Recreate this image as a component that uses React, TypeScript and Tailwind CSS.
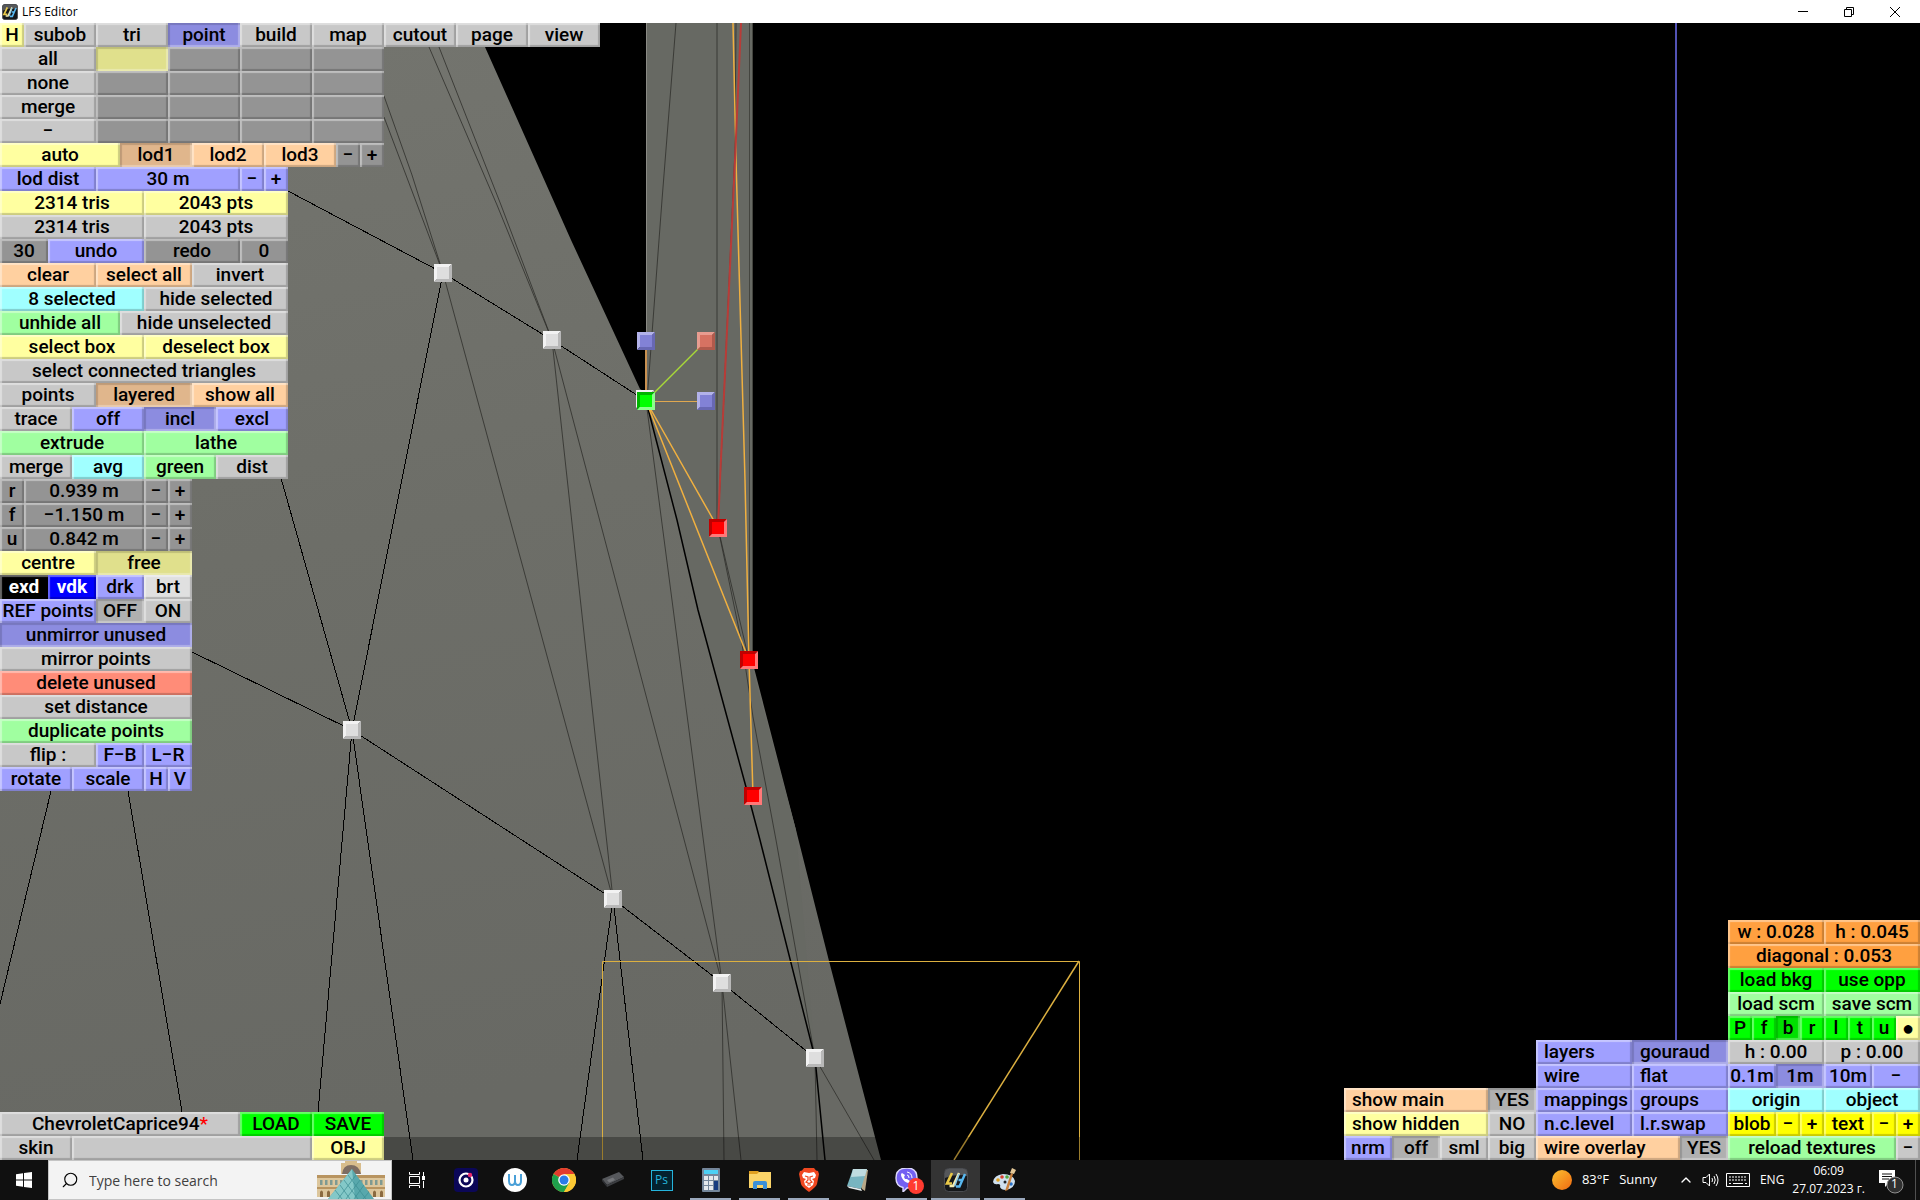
import { useState } from "react";
import type { ReactNode } from "react";
import { ChevronUp, Search } from "lucide-react";

type Cell = {
  label?: string;
  w: string;
  tone?: string;
  on?: boolean;
  left?: boolean;
};

// Every panel is built on a 24px module
const G = "bg-[#c8c8c8]";
const DARK = "bg-[#949494]";
const OFF = "bg-[#b0b0b0]";
const YELLOW = "bg-[#ffffa0]";
const BLUE = "bg-[#a0a0ff]";
const BLUE_ON = "bg-[#8c8ce0]";
const PEACH = "bg-[#ffd0a0]";
const PEACH_ON = "bg-[#e0b68c]";
const MINT = "bg-[#a0ffa0]";
const CYAN = "bg-[#a0ffff]";
const LIME = "bg-[#00ff00]";
const ORANGE = "bg-[#ffa040]";

const menuRow: Cell[] = [
  { label: "H", w: "w-6", tone: YELLOW },
  { label: "subob", w: "w-18" },
  { label: "tri", w: "w-18" },
  { label: "point", w: "w-18", tone: BLUE_ON, on: true },
  { label: "build", w: "w-18" },
  { label: "map", w: "w-18" },
  { label: "cutout", w: "w-18" },
  { label: "page", w: "w-18" },
  { label: "view", w: "w-18" },
];

const emptySlots = (count: number): Cell[] =>
  Array.from({ length: count }, () => ({ w: "w-18", tone: DARK }));

const stepper = (label: string, value: string): Cell[] => [
  { label, w: "w-6", tone: DARK },
  { label: value, w: "w-30", tone: DARK },
  { label: "−", w: "w-6", tone: DARK },
  { label: "+", w: "w-6", tone: DARK },
];

const toolRows: Cell[][] = [
  [
    { label: "all", w: "w-24" },
    { w: "w-18", tone: "bg-[#e0e08c]", on: true },
    ...emptySlots(3),
  ],
  [{ label: "none", w: "w-24" }, ...emptySlots(4)],
  [{ label: "merge", w: "w-24" }, ...emptySlots(4)],
  [{ label: "−", w: "w-24" }, ...emptySlots(4)],
  [
    { label: "auto", w: "w-30", tone: YELLOW },
    { label: "lod1", w: "w-18", tone: PEACH_ON, on: true },
    { label: "lod2", w: "w-18", tone: PEACH },
    { label: "lod3", w: "w-18", tone: PEACH },
    { label: "−", w: "w-6", tone: DARK },
    { label: "+", w: "w-6", tone: DARK },
  ],
  [
    { label: "lod dist", w: "w-24", tone: BLUE },
    { label: "30 m", w: "w-36", tone: BLUE },
    { label: "−", w: "w-6", tone: BLUE },
    { label: "+", w: "w-6", tone: BLUE },
  ],
  [
    { label: "2314 tris", w: "w-36", tone: YELLOW },
    { label: "2043 pts", w: "w-36", tone: YELLOW },
  ],
  [
    { label: "2314 tris", w: "w-36" },
    { label: "2043 pts", w: "w-36" },
  ],
  [
    { label: "30", w: "w-12", tone: DARK },
    { label: "undo", w: "w-24", tone: BLUE },
    { label: "redo", w: "w-24", tone: DARK },
    { label: "0", w: "w-12", tone: DARK },
  ],
  [
    { label: "clear", w: "w-24", tone: PEACH },
    { label: "select all", w: "w-24", tone: PEACH },
    { label: "invert", w: "w-24" },
  ],
  [
    { label: "8 selected", w: "w-36", tone: CYAN },
    { label: "hide selected", w: "w-36" },
  ],
  [
    { label: "unhide all", w: "w-30", tone: MINT },
    { label: "hide unselected", w: "w-42" },
  ],
  [
    { label: "select box", w: "w-36", tone: YELLOW },
    { label: "deselect box", w: "w-36", tone: YELLOW },
  ],
  [{ label: "select connected triangles", w: "w-72" }],
  [
    { label: "points", w: "w-24" },
    { label: "layered", w: "w-24", tone: PEACH_ON, on: true },
    { label: "show all", w: "w-24", tone: PEACH },
  ],
  [
    { label: "trace", w: "w-18" },
    { label: "off", w: "w-18", tone: BLUE },
    { label: "incl", w: "w-18", tone: BLUE_ON, on: true },
    { label: "excl", w: "w-18", tone: BLUE },
  ],
  [
    { label: "extrude", w: "w-36", tone: MINT },
    { label: "lathe", w: "w-36", tone: MINT },
  ],
  [
    { label: "merge", w: "w-18" },
    { label: "avg", w: "w-18", tone: CYAN },
    { label: "green", w: "w-18", tone: MINT },
    { label: "dist", w: "w-18" },
  ],
  stepper("r", "0.939 m"),
  stepper("f", "−1.150 m"),
  stepper("u", "0.842 m"),
  [
    { label: "centre", w: "w-24", tone: YELLOW },
    { label: "free", w: "w-24", tone: "bg-[#e0e08c]", on: true },
  ],
  [
    { label: "exd", w: "w-12", tone: "bg-black text-white font-bold" },
    { label: "vdk", w: "w-12", tone: "bg-[#0000ff] text-white font-bold" },
    { label: "drk", w: "w-12", tone: BLUE },
    { label: "brt", w: "w-12", tone: "bg-[#e0e0e0]" },
  ],
  [
    { label: "REF points", w: "w-24", tone: BLUE },
    { label: "OFF", w: "w-12", tone: OFF, on: true },
    { label: "ON", w: "w-12" },
  ],
  [{ label: "unmirror unused", w: "w-48", tone: BLUE_ON, on: true }],
  [{ label: "mirror points", w: "w-48" }],
  [{ label: "delete unused", w: "w-48", tone: "bg-[#ff8c78]" }],
  [{ label: "set distance", w: "w-48" }],
  [{ label: "duplicate points", w: "w-48", tone: MINT }],
  [
    { label: "flip :", w: "w-24" },
    { label: "F−B", w: "w-12", tone: BLUE },
    { label: "L−R", w: "w-12", tone: BLUE },
  ],
  [
    { label: "rotate", w: "w-18", tone: BLUE },
    { label: "scale", w: "w-18", tone: BLUE },
    { label: "H", w: "w-6", tone: BLUE },
    { label: "V", w: "w-6", tone: BLUE },
  ],
];

const showRows: Cell[][] = [
  [
    { label: "show main", w: "w-36", tone: PEACH, left: true },
    { label: "YES", w: "w-12", tone: OFF, on: true },
  ],
  [
    { label: "show hidden", w: "w-36", tone: YELLOW, left: true },
    { label: "NO", w: "w-12" },
  ],
  [
    { label: "nrm", w: "w-12", tone: BLUE },
    { label: "off", w: "w-12", tone: OFF, on: true },
    { label: "sml", w: "w-12" },
    { label: "big", w: "w-12" },
  ],
];

const modeRows: Cell[][] = [
  [
    { label: "layers", w: "w-24", tone: BLUE, left: true },
    { label: "gouraud", w: "w-24", tone: BLUE_ON, on: true, left: true },
  ],
  [
    { label: "wire", w: "w-24", tone: BLUE, left: true },
    { label: "flat", w: "w-24", tone: BLUE, left: true },
  ],
  [
    { label: "mappings", w: "w-24", tone: BLUE, left: true },
    { label: "groups", w: "w-24", tone: BLUE, left: true },
  ],
  [
    { label: "n.c.level", w: "w-24", tone: BLUE, left: true },
    { label: "l.r.swap", w: "w-24", tone: BLUE, left: true },
  ],
  [
    { label: "wire overlay", w: "w-36", tone: PEACH, left: true },
    { label: "YES", w: "w-12", tone: OFF, on: true },
  ],
];

const viewRows: Cell[][] = [
  [
    { label: "w : 0.028", w: "w-24", tone: ORANGE },
    { label: "h : 0.045", w: "w-24", tone: ORANGE },
  ],
  [{ label: "diagonal : 0.053", w: "w-48", tone: ORANGE }],
  [
    { label: "load bkg", w: "w-24", tone: LIME },
    { label: "use opp", w: "w-24", tone: LIME },
  ],
  [
    { label: "load scm", w: "w-24", tone: MINT },
    { label: "save scm", w: "w-24", tone: MINT },
  ],
  [
    { label: "P", w: "w-6", tone: LIME },
    { label: "f", w: "w-6", tone: LIME },
    { label: "b", w: "w-6", tone: "bg-[#00e000]", on: true },
    { label: "r", w: "w-6", tone: LIME },
    { label: "l", w: "w-6", tone: LIME },
    { label: "t", w: "w-6", tone: LIME },
    { label: "u", w: "w-6", tone: LIME },
    { label: "●", w: "w-6 text-xl", tone: YELLOW },
  ],
  [
    { label: "h : 0.00", w: "w-24" },
    { label: "p : 0.00", w: "w-24" },
  ],
  [
    { label: "0.1m", w: "w-12", tone: BLUE },
    { label: "1m", w: "w-12", tone: BLUE_ON, on: true },
    { label: "10m", w: "w-12", tone: BLUE },
    { label: "−", w: "w-12", tone: BLUE },
  ],
  [
    { label: "origin", w: "w-24", tone: CYAN },
    { label: "object", w: "w-24", tone: CYAN },
  ],
  [
    { label: "blob", w: "w-12", tone: "bg-[#ffff00]" },
    { label: "−", w: "w-6", tone: "bg-[#ffff00]" },
    { label: "+", w: "w-6", tone: "bg-[#ffff00]" },
    { label: "text", w: "w-12", tone: "bg-[#ffff00]" },
    { label: "−", w: "w-6", tone: "bg-[#ffff00]" },
    { label: "+", w: "w-6", tone: "bg-[#ffff00]" },
  ],
  [
    { label: "reload textures", w: "w-42", tone: MINT },
    { label: "−", w: "w-6" },
  ],
];

const RAISED =
  "shadow-[inset_2px_2px_1px_rgba(255,255,255,0.4),inset_-2px_-2px_1px_rgba(0,0,0,0.2)]";
const SUNKEN =
  "shadow-[inset_2px_2px_1px_rgba(0,0,0,0.15),inset_-2px_-2px_1px_rgba(255,255,255,0.3)]";

function Key({ cell }: { cell: Cell }) {
  return (
    <button
      type="button"
      aria-pressed={cell.on}
      aria-label={cell.label ? undefined : "empty slot"}
      className={`h-6 shrink-0 overflow-hidden whitespace-nowrap leading-6 ${cell.w} ${
        cell.tone ?? G
      } ${cell.on ? SUNKEN : RAISED} ${cell.left ? "pl-2 text-left" : "text-center"}`}>
      {cell.label}
    </button>
  );
}

function Rows({ rows }: { rows: Cell[][] }) {
  return (
    <div className="flex flex-col">
      {rows.map((row, i) => (
        <div key={i} className="flex">
          {row.map((cell, j) => (
            <Key key={j} cell={cell} />
          ))}
        </div>
      ))}
    </div>
  );
}

// Mesh edges, in viewport space
const blackEdges = [
  "288,191 443,273 552,340 646,401",
  "192,652 352,730 613,899 722,983 815,1058",
  "443,273 352,730",
  "352,730 318,1112",
  "352,730 413,1160",
  "51,791 0,1004",
  "128,791 182,1112",
  "613,899 577,1160",
  "613,899 643,1160",
  "281,478 352,730",
];

const faintEdges = [
  "384,96 412,175 443,273",
  "384,117 443,273",
  "429,47 497,205 552,340",
  "439,47 501,205 552,340",
  "443,273 613,899",
  "552,340 613,899",
  "552,340 722,983",
  "646,401 722,983",
  "676,23 662,200 647,401",
  "717,23 717,528",
  "736,23 735,150 718,528",
  "718,528 742,644 753,717 776,840 815,1058",
  "718,528 749,660",
  "722,983 724,1160",
  "722,983 741,1160",
  "815,1058 874,1160",
  "815,1058 817,1160",
];

const markers = [
  { x: 443, y: 273, c: "white" },
  { x: 552, y: 340, c: "white" },
  { x: 352, y: 730, c: "white" },
  { x: 613, y: 899, c: "white" },
  { x: 722, y: 983, c: "white" },
  { x: 815, y: 1058, c: "white" },
  { x: 645, y: 399, c: "white" },
  { x: 646, y: 401, c: "green" },
  { x: 646, y: 341, c: "blue" },
  { x: 706, y: 401, c: "blue" },
  { x: 706, y: 341, c: "rose" },
  { x: 718, y: 528, c: "red" },
  { x: 749, y: 660, c: "red" },
  { x: 753, y: 796, c: "red" },
];

// face, top/left bevel, bottom/right bevel
const markerTones: { [key: string]: [string, string, string] } = {
  white: ["#dedede", "#f2f2f2", "#b8b8b8"],
  green: ["#00ff00", "#00b400", "#8cff8c"],
  blue: ["#8282d6", "#b2b2ea", "#6868b4"],
  rose: ["#d67262", "#e89c90", "#b05a4c"],
  red: ["#ff0000", "#c00000", "#ff7878"],
};

function Marker({ x, y, c }: { x: number; y: number; c: string }) {
  const [face, light, dark] = markerTones[c];
  return (
    <g transform={`translate(${x - 9} ${y - 9})`}>
      <path d="M0 0H18L14 4H4V14L0 18Z" fill={light} />
      <path d="M18 18H0L4 14H14V4L18 0Z" fill={dark} />
      <rect x="3" y="3" width="12" height="12" fill={face} />
    </g>
  );
}

function Viewport() {
  return (
    <svg
      className="absolute inset-0 h-full w-full"
      viewBox="0 23 1920 1137"
      preserveAspectRatio="xMinYMin slice"
      fill="none"
      aria-label="3D viewport">
      <defs>
        <linearGradient id="panel" x1="0" y1="0" x2="0.15" y2="1">
          <stop offset="0" stopColor="#74756f" />
          <stop offset="0.5" stopColor="#6d6e68" />
          <stop offset="1" stopColor="#686964" />
        </linearGradient>
      </defs>
      <rect y="23" width="1920" height="1137" fill="#000" />
      <path
        d="M0 23H475L485 47L571 240L640 389L660 401L752 660L796 830L829 961L881 1160H0Z"
        fill="url(#panel)"
      />
      <path
        d="M646 23H753V672L796 830L815 1058L760 840L746 787L727 717L698 610L677 520L646 401Z"
        fill="#676963"
      />
      <path d="M646.5 23V401" stroke="#8a8a84" />
      <path d="M749.5 23V660M752.5 23V660" stroke="#44453f" />

      {/* Wireframe */}
      <g stroke="#2e2f2b" strokeWidth="0.8">
        {faintEdges.map((points) => (
          <polyline key={points} points={points} />
        ))}
      </g>
      <g stroke="#000" shapeRendering="crispEdges">
        {blackEdges.map((points) => (
          <polyline key={points} points={points} />
        ))}
      </g>
      <polyline
        points="646,401 677,520 698,610 727,717 746,787 760,840 815,1058 825,1160"
        stroke="#000"
        strokeWidth="1.5"
      />

      {/* Selection and guides */}
      <path d="M1676 23V1160" stroke="#5252b4" strokeWidth="2" />
      <g stroke="#f0b040">
        <path d="M733 23L736 160L745 480L749 660L753 796" strokeWidth="1.5" />
        <path d="M646 401L718 528M646 401L749 660" strokeWidth="1.5" />
        <path d="M602.5 1160V961.5H1079.5V1160" stroke="#dcb040" />
        <path d="M1079 961L954 1160" stroke="#dcb040" strokeWidth="1.5" />
      </g>
      <path d="M741 23L735 160L720 480L718 528" stroke="#b83c38" strokeWidth="2" />
      <path d="M646 341V401" stroke="#c89050" strokeWidth="2" />
      <path d="M646 401.5H706" stroke="#e0a850" />
      <path d="M646 401L706 341" stroke="#a8d838" strokeWidth="1.5" />

      {markers.map((m) => (
        <Marker key={`${m.x}-${m.y}`} {...m} />
      ))}
      <path d="M384 1137H1344V1160H384Z" fill="#000" fillOpacity="0.3" />
    </svg>
  );
}

function LfsIcon({ className }: { className: string }) {
  return (
    <svg viewBox="0 0 24 24" className={className} fill="none" aria-hidden="true">
      <rect x="0.5" y="0.5" width="23" height="23" rx="4" fill="#15171a" stroke="#4a4c50" />
      <path d="M1 4Q1 1 4 1H20Q23 1 23 4V8Q12 5 1 10Z" fill="#55575a" />
      <path d="M8 5L3 15.500H8" stroke="#e8c848" strokeWidth="2.6" />
      <path d="M15 5L9 18H5.500" stroke="#f4ecb0" strokeWidth="2.4" />
      <path d="M15 6L10.500 18.500" stroke="#8cc8e8" strokeWidth="1.6" />
      <path d="M21 6L15.500 18.500H12M14.500 12H18" stroke="#58b8f0" strokeWidth="2.4" />
    </svg>
  );
}

function TitleBar() {
  return (
    <header className="flex h-[23px] shrink-0 items-center bg-white pr-0.5 font-['Open_Sans',sans-serif] text-xs text-black">
      <LfsIcon className="ml-0.5 h-4 w-4" />
      <h1 className="ml-1 flex-1">LFS Editor</h1>
      <button type="button" aria-label="Minimize" className="flex h-5 w-[46px] items-center justify-center">
        <svg viewBox="0 0 10 10" className="h-2.5 w-2.5" stroke="#000">
          <path d="M0 4.500H10" />
        </svg>
      </button>
      <button type="button" aria-label="Restore" className="flex h-5 w-[46px] items-center justify-center">
        <svg viewBox="0 0 10 10" className="h-2.5 w-2.5" fill="none" stroke="#000">
          <path d="M0.5 2.5H7.5V9.5H0.5ZM2.5 2.5V0.5H9.5V7.5H7.5" />
        </svg>
      </button>
      <button type="button" aria-label="Close" className="flex h-5 w-[46px] items-center justify-center">
        <svg viewBox="0 0 10 10" className="h-2.5 w-2.5" stroke="#000">
          <path d="M0 0L10 10M10 0L0 10" />
        </svg>
      </button>
    </header>
  );
}

function SearchArt() {
  return (
    <svg viewBox="0 0 68 38" className="h-[38px] w-[68px] shrink-0" aria-hidden="true">
      <path d="M24 13V2H28V0H40V2H44V13Z" fill="#d8bd8c" />
      <path d="M25 13Q26 4 34 4Q42 4 44 13Z" fill="#7d6d62" />
      <path d="M0 14H68V36H0Z" fill="#dcc69c" />
      <path d="M0 14H68V17H0ZM0 26H68V28H0Z" fill="#b89460" />
      <g fill="#7f9a92">
        {[3, 8, 13, 18, 23, 43, 48, 53, 58, 63].map((x) => (
          <rect key={x} x={x} y="19" width="2.5" height="5" />
        ))}
      </g>
      <g fill="#8a6a40">
        {[3, 10, 17, 24, 42, 49, 56, 63].map((x) => (
          <path key={x} d={`M${x} 36V31Q${x + 1.5} 28 ${x + 3} 31V36Z`} />
        ))}
      </g>
      <path d="M35 8L57 38H11Z" fill="#58a8ac" />
      <path d="M35 8L38 38H11Z" fill="#84c8c8" />
      <path
        d="M31 14L49 38M27 19L41 38M23 24L33 38M18 29L25 38M39 14L21 38M43 19L29 38M47 24L37 38M52 31L46 38"
        stroke="#3c8c92"
        strokeWidth="0.7"
      />
    </svg>
  );
}

function TaskButton({
  label,
  open,
  active,
  children,
}: {
  label: string;
  open?: boolean;
  active?: boolean;
  children: ReactNode;
}) {
  return (
    <button
      type="button"
      aria-label={label}
      className={`relative flex h-10 w-[49px] shrink-0 items-center justify-center ${
        active ? "bg-[#343434]" : ""
      }`}>
      {children}
      {(open || active) && (
        <span
          className={`absolute bottom-0 h-0.5 bg-[#9aa8bc] ${active ? "inset-x-0" : "inset-x-1"}`}
        />
      )}
    </button>
  );
}

function TaskIcons() {
  return (
    <nav className="flex">
      <TaskButton label="Task View">
        <svg viewBox="0 0 16 16" className="h-4 w-4" fill="none" stroke="#fff">
          <path d="M0.5 0V2.5H10.5V0M0.5 16V13.5H10.5V16M0.5 4.5H10.5V11.5H0.5ZM14.5 0V4M14.5 9V16" />
          <rect x="13" y="4" width="3" height="4" fill="#fff" stroke="none" />
        </svg>
      </TaskButton>
      <TaskButton label="Groove">
        <svg viewBox="0 0 24 24" className="h-6 w-6" fill="none">
          <rect width="24" height="24" rx="4" fill="#0b0757" />
          <circle cx="12" cy="12" r="6.5" stroke="#fff" strokeWidth="2.2" />
          <circle cx="12" cy="12" r="2.5" fill="#fff" />
          <circle cx="16" cy="7" r="2.2" fill="#e8286c" />
        </svg>
      </TaskButton>
      <TaskButton label="Wattpad">
        <svg viewBox="0 0 24 24" className="h-6 w-6" fill="none">
          <circle cx="12" cy="12" r="12" fill="#fff" />
          <path
            d="M6 6V13Q6 17 9 17Q12 17 12 13V7M12 13Q12 17 15 17Q18 17 18 13V6"
            stroke="#4aa0d8"
            strokeWidth="2"
          />
        </svg>
      </TaskButton>
      <TaskButton label="Chrome">
        <svg viewBox="0 0 24 24" className="h-6 w-6">
          <circle cx="12" cy="12" r="12" fill="#fcc934" />
          <path d="M12 12L1.6 6A12 12 0 0 1 22.4 6Z" fill="#e33b2e" />
          <path d="M1.6 6A12 12 0 0 0 12 24L17.2 15L12 12Z" fill="#1fa04c" />
          <path d="M12 6H22.4A12 12 0 0 1 12 24L17.2 15Z" fill="#fcc934" />
          <circle cx="12" cy="12" r="5.8" fill="#fff" />
          <circle cx="12" cy="12" r="4.5" fill="#2c7be8" />
        </svg>
      </TaskButton>
      <TaskButton label="Device">
        <svg viewBox="0 0 24 24" className="h-6 w-6">
          <path d="M1 11L18 4L23 9L6 17Z" fill="#56585c" />
          <path d="M1 11L6 17V19L1 13Z" fill="#303236" />
          <path d="M6 17L23 9V11L6 19Z" fill="#3c3e42" />
          <path d="M6 12L12 9.500L14 12L8 14.500Z" fill="#75777b" />
        </svg>
      </TaskButton>
      <TaskButton label="Photoshop">
        <span className="flex h-[21px] w-[22px] items-center justify-center border border-[#25b4dc] bg-[#04222e] font-['Open_Sans',sans-serif] text-xs text-[#25b4dc]">
          Ps
        </span>
      </TaskButton>
      <TaskButton label="Calculator" open>
        <svg viewBox="0 0 18 24" className="h-6 w-[18px]">
          <rect width="18" height="24" rx="1" fill="#74869a" />
          <rect x="2" y="2" width="14" height="4" fill="#4cd0f4" />
          <g fill="#e4e8ec">
            <path d="M2 8H6V12H2ZM7 8H11V12H7ZM2 13H6V17H2ZM7 13H11V17H7ZM2 18H6V22H2ZM7 18H11V22H7ZM12 8H16V12H12Z" />
          </g>
          <path d="M12 13H16V22H12Z" fill="#163c80" />
        </svg>
      </TaskButton>
      <TaskButton label="File Explorer" open>
        <svg viewBox="0 0 22 18" className="h-[18px] w-[22px]">
          <path d="M0 0H9L11 2V6H0Z" fill="#e0a020" />
          <path d="M0 3H8L10 1H22V17H0Z" fill="#fbd468" />
          <path d="M4 18V12Q4 10 6 10H16Q18 10 18 12V18H14V14H8V18Z" fill="#3c90d8" />
        </svg>
      </TaskButton>
      <TaskButton label="Brave" open>
        <svg viewBox="0 0 20 24" className="h-6 w-5">
          <path d="M5 0H15L17 2.500L19 3L20 6L18 16Q17 19 10 24Q3 19 2 16L0 6L1 3L3 2.500Z" fill="#f04820" />
          <path
            d="M5 4L10 5L15 4L17 7L16 10L13 11L15 13L14 17L10 20L6 17L5 13L7 11L4 10L3 7Z"
            fill="#fff"
          />
          <path
            d="M6 8L9 9V12L7 14L10 15.500L13 14L11 12V9L14 8M8 17H12"
            fill="none"
            stroke="#f04820"
            strokeWidth="1.2"
          />
        </svg>
      </TaskButton>
      <TaskButton label="Notepad">
        <svg viewBox="0 0 24 24" className="h-6 w-6">
          <path d="M7 2H22L19 23L16 21Z" fill="#b8a888" />
          <path d="M7 1H21L15 21L1 18Z" fill="#78b4c0" />
          <path d="M7 1H21L19 8L5 9Z" fill="#c0dce0" />
          <path d="M1 18L15 21L16 23L3 20Z" fill="#e8eef0" />
        </svg>
      </TaskButton>
      <TaskButton label="Viber" open>
        <svg viewBox="0 0 24 24" className="h-6 w-6" fill="none">
          <path
            d="M12 0Q22 0 22 10Q22 20 12 20L8 24V19.500Q1 18 1 10Q1 0 12 0Z"
            fill="#7360f2"
            stroke="#dcd8fc"
            strokeWidth="1.4"
          />
          <path d="M7 5Q5 6 7 10Q9 14 13 15Q15 15 15 13L12 11L10 11L9 9L10 7Z" fill="#fff" />
          <path d="M12 4Q17 5 17 10M12 7Q14 7 14 10" stroke="#fff" />
        </svg>
        <span className="absolute bottom-1.5 left-[26px] flex h-4 w-4 items-center justify-center rounded-full bg-[#ff3b30] font-['Open_Sans',sans-serif] text-xs text-white">
          1
        </span>
      </TaskButton>
      <TaskButton label="LFS Editor" active>
        <LfsIcon className="h-6 w-6" />
      </TaskButton>
      <TaskButton label="Paint" open>
        <svg viewBox="0 0 24 24" className="h-6 w-6">
          <path
            d="M10 6Q1 7 0 14Q1 17 5 16Q8 16 7 19Q8 22 13 22Q22 20 22 13Q20 6 10 6Z"
            fill="#cfe0ee"
          />
          <circle cx="5" cy="12" r="1.8" fill="#e0a020" />
          <circle cx="9" cy="9" r="1.8" fill="#d84030" />
          <circle cx="14" cy="9" r="1.8" fill="#50a840" />
          <circle cx="12" cy="14" r="1.5" fill="#202428" />
          <circle cx="18" cy="16" r="1.8" fill="#2870c8" />
          <path d="M12 23L18 5L20 6L15 22Z" fill="#c8803c" />
          <path d="M17 5L19 0L23 2L21 6Z" fill="#e4c898" />
        </svg>
      </TaskButton>
    </nav>
  );
}

function Taskbar() {
  return (
    <footer className="relative flex h-10 shrink-0 items-stretch bg-[#101010] font-['Open_Sans',sans-serif] text-white">
      <button type="button" aria-label="Start" className="flex w-12 items-center justify-center">
        <svg viewBox="0 0 16 16" className="h-4 w-4" fill="#fff">
          <path d="M0 2.200L7 1.200V7.500H0ZM8 1L16 0V7.500H8ZM0 8.500H7V14.800L0 13.800ZM8 8.500H16V16L8 15Z" />
        </svg>
      </button>
      <label className="flex w-[344px] items-center border border-[#c4c4c4] bg-[#f3f3f3] pl-3 pr-1.5 text-[#303030]">
        <Search className="h-[18px] w-[18px] -scale-x-100 text-black" strokeWidth={1.5} />
        <input
          type="text"
          placeholder="Type here to search"
          aria-label="Search"
          className="ml-2.5 min-w-0 flex-1 bg-transparent text-[14px] outline-none placeholder:text-[#404040]"
        />
        <SearchArt />
      </label>
      <TaskIcons />
      <div className="ml-auto flex items-center text-[13px]">
        <span className="h-5 w-5 rounded-full bg-linear-to-br from-[#f8c030] to-[#f06810]" />
        <span className="ml-2.5 w-23 whitespace-nowrap">83°F&nbsp;&nbsp; Sunny</span>
        <ChevronUp className="ml-1 h-4 w-4" strokeWidth={2} />
        <svg viewBox="0 0 18 16" className="ml-2 h-4 w-[18px]" fill="none" stroke="#fff" aria-label="Volume">
          <path d="M1 5.500H4L7.500 2V14L4 10.500H1ZM10 6Q11 8 10 10M12 4Q14.500 8 12 12M14 2Q18 8 14 14" />
        </svg>
        <svg viewBox="0 0 24 14" className="ml-1.5 h-3.5 w-6" fill="none" stroke="#fff" aria-label="Keyboard">
          <path d="M0.500 0.500H23.500V13.500H0.500Z" />
          <path d="M3 4H21M3 7H21" strokeDasharray="2 1" />
          <path d="M3 10.500H5M7 10.500H17M19 10.500H21" />
        </svg>
        <span className="ml-2.5 text-xs">ENG</span>
        <time className="ml-2 flex flex-col items-center text-xs leading-[18px]">
          <span>06:09</span>
          <span>27.07.2023 г.</span>
        </time>
        <button type="button" aria-label="Notifications" className="relative ml-3 mr-2.5 h-8 w-7">
          <svg viewBox="0 0 28 32" className="h-8 w-7">
            <path d="M2 6H18V19H12L8 23V19H2Z" fill="#fff" />
            <path d="M5 10H15M5 12.500H15M5 15H12" stroke="#101010" />
            <circle cx="18" cy="21" r="8" fill="#303030" stroke="#909090" />
          </svg>
          <span className="absolute left-3.5 top-3 text-xs">1</span>
        </button>
        <span className="mr-1 h-10 w-px bg-[#505050]" />
      </div>
    </footer>
  );
}

export default function App() {
  const [skin, setSkin] = useState("");

  return (
    <div className="flex min-h-screen flex-col bg-black">
      <TitleBar />
      <main className="relative flex flex-1 flex-col justify-between overflow-hidden font-[Roboto,sans-serif] text-[19px] font-medium text-black">
        <Viewport />
        <div className="relative w-fit">
          <Rows rows={[menuRow, ...toolRows]} />
        </div>

        <div className="relative flex items-end justify-between">
          {/* File panel */}
          <div>
            <div className="flex">
              <button
                type="button"
                className={`h-6 w-60 text-center leading-6 ${G} ${RAISED}`}>
                ChevroletCaprice94<span className="text-[#ff0000]">*</span>
              </button>
              <Key cell={{ label: "LOAD", w: "w-18", tone: LIME }} />
              <Key cell={{ label: "SAVE", w: "w-18", tone: LIME }} />
            </div>
            <div className="flex">
              <label htmlFor="skin" className={`h-6 w-18 text-center leading-6 ${G} ${RAISED}`}>
                skin
              </label>
              <input
                id="skin"
                type="text"
                value={skin}
                onChange={(e) => setSkin(e.target.value)}
                className={`h-6 w-60 px-2 outline-none ${G} ${RAISED}`}
              />
              <Key cell={{ label: "OBJ", w: "w-18", tone: YELLOW }} />
            </div>
          </div>

          {/* View panels */}
          <div className="flex items-end">
            <Rows rows={showRows} />
            <Rows rows={modeRows} />
            <Rows rows={viewRows} />
          </div>
        </div>
      </main>
      <Taskbar />
    </div>
  );
}
